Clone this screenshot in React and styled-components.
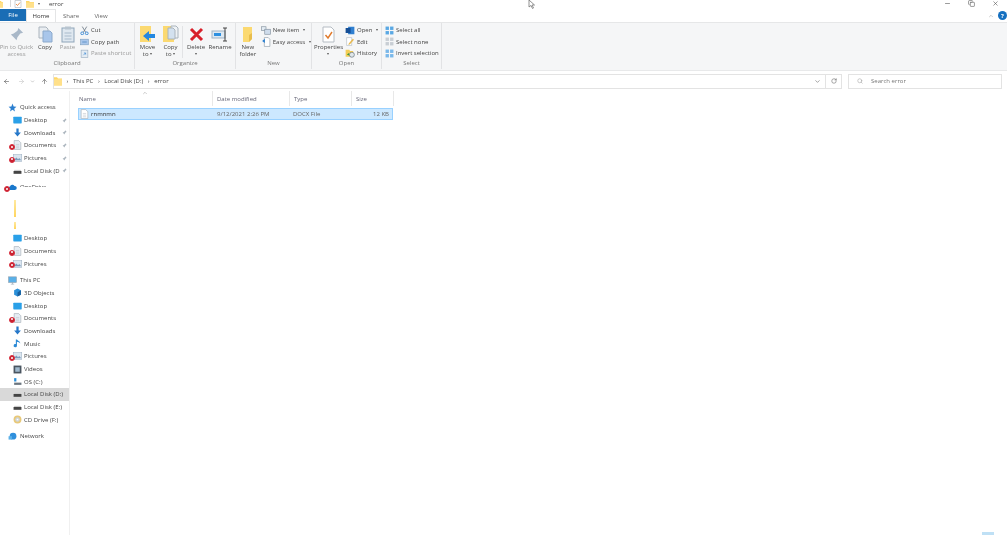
import React from "react";
import styled, { createGlobalStyle } from "styled-components";
import { ChevronDown, ChevronUp, RotateCw, ArrowLeft, ArrowRight, ArrowUp, Search, Minus, X, Copy as CopyGlyph } from "lucide-react";

const GlobalStyle = createGlobalStyle`
  html, body { margin: 0; padding: 0; background: #fff; }
  * { box-sizing: border-box; }
`;

const Page = styled.div`
  position: relative;
  width: 1007px;
  height: 535px;
  overflow: hidden;
  background: #fff;
  color: #333;
  font-family: "Open Sans", "Liberation Sans", sans-serif;
  font-size: 6px;
  line-height: 1;
  filter: blur(0.35px);
`;

/* title bar */
const TitleBar = styled.div`
  height: 9px;
  display: flex;
  align-items: center;
  position: relative;
`;
const QuickTools = styled.div`
  display: grid;
  grid-template-columns: 10px 4px 12px 12px 11px;
  align-items: center;
  height: 9px;
  overflow: hidden;
  margin-top: -2px;
`;
const ToolLine = styled.span`
  display: block;
  width: 1px;
  height: 7px;
  background: #d8d8d8;
`;
const TitleText = styled.span`
  margin-top: -2px;
  color: #444;
`;
const WindowButtons = styled.div`
  margin-left: auto;
  margin-right: 8px;
  margin-top: -3px;
  display: flex;
  gap: 17px;
  color: #555;
`;
const Cursor = styled.svg`
  position: absolute;
  left: 528px;
  top: 0;
`;

/* tabs */
const TabBar = styled.div`
  height: 13px;
  display: flex;
  align-items: stretch;
  background: #fff;
  position: relative;
`;
const FileTab = styled.div`
  width: 26px;
  background: #1a6db5;
  color: #fff;
  display: flex;
  align-items: center;
  justify-content: center;
  margin-bottom: 1px;
`;
const Tab = styled.div`
  width: 30px;
  display: flex;
  align-items: center;
  justify-content: center;
  color: ${({ $active }) => ($active ? "#333" : "#666")};
  border: 1px solid ${({ $active }) => ($active ? "#e4e5e6" : "transparent")};
  border-bottom: 0;
  background: #fff;
`;
const TabRight = styled.div`
  margin-left: auto;
  display: flex;
  align-items: center;
  gap: 4px;
  color: #999;
`;
const Help = styled.div`
  width: 9px;
  height: 9px;
  border-radius: 50%;
  background: #1570c0;
  color: #fff;
  font-weight: 700;
  display: flex;
  align-items: center;
  justify-content: center;
`;

/* ribbon */
const Ribbon = styled.div`
  height: 49px;
  display: flex;
  background: #f5f6f7;
  border-top: 1px solid #e6e7e8;
  border-bottom: 1px solid #e8e9ea;
`;
const Group = styled.div`
  width: ${({ $w }) => $w}px;
  height: 46px;
  display: flex;
  flex-direction: column;
  border-right: 1px solid #e2e3e5;
`;
const GroupBody = styled.div`
  flex: 1;
  display: flex;
  padding-left: ${({ $pad }) => $pad || 0}px;
`;
const GroupLabel = styled.div`
  height: 8px;
  margin-bottom: 2px;
  display: flex;
  align-items: center;
  justify-content: center;
  color: #777;
`;
const Large = styled.div`
  width: ${({ $w }) => $w}px;
  display: flex;
  flex-direction: column;
  align-items: center;
  padding-top: 2px;
  text-align: center;
  line-height: 7px;
  color: ${({ $dim }) => ($dim ? "#9a9a9a" : "#444")};
`;
const LargeIcon = styled.div`
  height: 18px;
  margin-bottom: 1px;
  display: flex;
  align-items: center;
  justify-content: center;
`;
const NoWrap = styled.span`
  white-space: nowrap;
`;
const GroupDivider = styled.div`
  width: 1px;
  height: 32px;
  margin-top: 3px;
  background: #e2e3e5;
`;
const Caret = styled.span`
  display: inline-block;
  width: 0;
  height: 0;
  border-left: 1.5px solid transparent;
  border-right: 1.5px solid transparent;
  border-top: 2px solid #555;
  margin-left: ${({ $gap }) => $gap ?? 2}px;
  vertical-align: 1px;
`;
const SmallColumn = styled.div`
  display: flex;
  flex-direction: column;
  gap: 2.6px;
  padding-top: 2.5px;
  margin-left: ${({ $ml }) => $ml || 0}px;
`;
const SmallItem = styled.div`
  height: 9px;
  display: flex;
  align-items: center;
  gap: 2px;
  white-space: nowrap;
  color: ${({ $dim }) => ($dim ? "#9a9a9a" : "#444")};
`;

/* address row */
const AddressRow = styled.div`
  height: 20px;
  display: flex;
  align-items: center;
  padding-left: 3px;
  color: #555;
`;
const NavArrows = styled.div`
  width: 50px;
  display: grid;
  grid-template-columns: 15px 12px 11px 12px;
  align-items: center;
`;
const AddressBox = styled.div`
  width: 773px;
  height: 15px;
  display: flex;
  align-items: center;
  border: 1px solid #e3e3e3;
  gap: 4.6px;
  color: #444;
`;
const AddressEnd = styled.div`
  margin-left: auto;
  margin-right: 4px;
  color: #666;
  display: flex;
`;
const Refresh = styled.div`
  width: 16px;
  height: 15px;
  border: 1px solid #e3e3e3;
  border-left: 0;
  display: flex;
  align-items: center;
  justify-content: center;
  color: #555;
`;
const SearchBox = styled.div`
  width: 154px;
  height: 15px;
  margin-left: 6px;
  border: 1px solid #e3e3e3;
  display: flex;
  align-items: center;
  padding-left: 8px;
  gap: 8px;
  color: #777;
`;

/* body */
const Body = styled.div`
  display: flex;
  height: 444px;
`;
const NavPane = styled.div`
  width: 70px;
  border-right: 1px solid #f0f0f0;
  padding-top: 10px;
  display: flex;
  flex-direction: column;
`;
const NavGap = styled.div`
  height: ${({ $h }) => $h}px;
  flex: none;
`;
const NavRow = styled.div`
  position: relative;
  height: 12.7px;
  flex: none;
  width: 69px;
  display: flex;
  align-items: center;
  padding-left: ${({ $top }) => ($top ? 8 : 13)}px;
  gap: ${({ $top }) => ($top ? 3 : 2)}px;
  background: ${({ $sel }) => ($sel ? "#d9d9d9" : "transparent")};
  color: #444;
  white-space: nowrap;
`;
const PinMark = styled.svg`
  position: absolute;
  left: 62px;
  top: 4px;
`;
const ErrorBadge = styled.span`
  position: absolute;
  left: ${({ $top }) => ($top ? 4 : 9)}px;
  top: 5px;
  width: 6px;
  height: 6px;
  border-radius: 50%;
  background: #c8202f;
  border: 1.5px solid #d82f3f;
  display: block;
  &::after {
    content: "";
    display: block;
    width: 2px;
    height: 2px;
    margin: 0.5px;
    border-radius: 50%;
    background: #fff;
  }
`;
const CutText = styled.span`
  display: block;
  height: 4px;
  overflow: hidden;
  line-height: 8px;
  margin-top: -5px;
`;
const Sliver = styled.div`
  height: ${({ $h }) => $h}px;
  width: 2px;
  margin-left: 14px;
  flex: none;
  background: linear-gradient(#ffe9a0, #ffd55e);
`;

/* list */
const List = styled.div`
  flex: 1;
  position: relative;
  padding-left: 8px;
`;
const SortMark = styled.div`
  position: absolute;
  left: 72px;
  top: -1px;
  color: #999;
`;
const ColumnHeader = styled.div`
  display: grid;
  grid-template-columns: 135px 77px 62px 42px;
  height: 17px;
  align-items: start;
  color: #667;
`;
const HeadCell = styled.div`
  height: 15px;
  display: flex;
  align-items: center;
  padding-left: ${({ $first }) => ($first ? 1 : 4)}px;
  border-right: 1px solid #e8e8e8;
`;
const FileRow = styled.div`
  display: grid;
  grid-template-columns: 134px 76px 62px 41px;
  width: 315px;
  height: 12px;
  align-items: center;
  background: #cce8ff;
  border: 1px solid #99d1ff;
  color: #666;
`;
const FileName = styled.div`
  display: flex;
  align-items: center;
  gap: 2px;
  padding-left: 1px;
  color: #333;
`;
const FileCell = styled.div`
  padding-left: ${({ $right }) => ($right ? 0 : 4)}px;
  padding-right: ${({ $right }) => ($right ? 3 : 0)}px;
  text-align: ${({ $right }) => ($right ? "right" : "left")};
`;
const Scrap = styled.div`
  position: absolute;
  left: 982px;
  bottom: 0;
  width: 12px;
  height: 3px;
  background: #bfe0f5;
`;

/* drawings */
const Folder = ({ w = 9, h = 9, c = "#ffd766" }) => (
  <svg width={w} height={h} viewBox="0 0 16 16" preserveAspectRatio="none">
    <path d="M0 2h6l2 2h8v11H0z" fill={c} />
    <path d="M0 5h16v10H0z" fill="#ffe08a" />
  </svg>
);
const Tick = () => (
  <svg width="8" height="8" viewBox="0 0 16 16">
    <path d="M2 1h12v14H2z" fill="#fff" stroke="#9aa4ae" />
    <path d="M4 8l3 3 5-6" stroke="#e07a2c" strokeWidth="1.600" fill="none" />
  </svg>
);
const Doc = ({ c = "#fff", b = "#9aa4ae" }) => (
  <svg width="9" height="10" viewBox="0 0 16 18">
    <path d="M2 1h8l4 4v12H2z" fill={c} stroke={b} />
    <path d="M5 8h6M5 11h6M5 14h6" stroke="#b8c0c8" />
  </svg>
);
const Screen = ({ c = "#2aa0e8" }) => (
  <svg width="9" height="8" viewBox="0 0 16 14">
    <rect x="0.5" y="1" width="15" height="12" rx="1" fill={c} />
  </svg>
);
const Down = () => (
  <svg width="9" height="9" viewBox="0 0 16 16">
    <path d="M6 1h4v7h4l-6 7-6-7h4z" fill="#2678c9" />
  </svg>
);
const PicIcon = () => (
  <svg width="9" height="8" viewBox="0 0 16 14">
    <rect x="0.5" y="1" width="15" height="12" fill="#dbe6f0" stroke="#9fb2c4" />
    <path d="M2 10l4-4 3 3 2-2 3 3v1H2z" fill="#7b9cbc" />
  </svg>
);
const Drive = () => (
  <svg width="9" height="8" viewBox="0 0 16 14">
    <rect x="1" y="7" width="14" height="5" fill="#444" />
    <rect x="2" y="5" width="12" height="2" fill="#ccc" />
  </svg>
);
const Star = () => (
  <svg width="9" height="9" viewBox="0 0 16 16">
    <path d="M8 1l2 5 5 .5-4 3.5 1.500 5L8 12l-4.500 3L5 10 1 6.500 6 6z" fill="#2b7fd0" />
  </svg>
);
const Cloud = () => (
  <svg width="9" height="7" viewBox="0 0 18 12">
    <path d="M4 11a3.500 3.500 0 0 1 0-7 5 5 0 0 1 9-1 4 4 0 0 1 1 8z" fill="#1a78cc" />
  </svg>
);
const Pc = () => (
  <svg width="9" height="9" viewBox="0 0 16 15">
    <rect x="1" y="1" width="14" height="10" fill="#5ab0e8" stroke="#8a9aa8" />
    <path d="M5 14h6M8 11v3" stroke="#8a9aa8" />
  </svg>
);
const Cube = () => (
  <svg width="9" height="9" viewBox="0 0 16 16">
    <path d="M8 1l6 3v8l-6 3-6-3V4z" fill="#2a8fd8" />
    <path d="M8 8l6-4v8l-6 3z" fill="#175f9e" />
  </svg>
);
const Note = () => (
  <svg width="9" height="10" viewBox="0 0 16 18">
    <path d="M7 1v11a3 3 0 1 1-2-2.800V1zM7 1c2 3 6 3 6 7-1-2-4-2-6-3z" fill="#2b8ad6" />
  </svg>
);
const Film = () => (
  <svg width="9" height="9" viewBox="0 0 16 16">
    <rect x="1" y="1" width="14" height="14" fill="#4a5560" />
    <rect x="4" y="4" width="8" height="8" fill="#9fb8cc" />
  </svg>
);
const OsDrive = () => (
  <svg width="9" height="9" viewBox="0 0 16 16">
    <path d="M2 2h4v6H2z" fill="#2a8fd8" />
    <rect x="2" y="10" width="13" height="4" fill="#6b7680" />
  </svg>
);
const Disc = () => (
  <svg width="9" height="9" viewBox="0 0 16 16">
    <circle cx="8" cy="8" r="7" fill="#e8c878" />
    <circle cx="8" cy="8" r="4" fill="#cfd6dc" />
    <circle cx="8" cy="8" r="1.500" fill="#fff" />
  </svg>
);
const Net = () => (
  <svg width="9" height="9" viewBox="0 0 16 15">
    <circle cx="9" cy="7" r="6" fill="#2f8fdc" />
    <rect x="1" y="7" width="6" height="6" fill="#5ab0e8" />
  </svg>
);
const BigPin = () => (
  <svg width="15" height="15" viewBox="0 0 16 16">
    <path d="M10 1l5 5-3 1-3 4-1 3-3-3-4 4 4-4-3-3 3-1 4-3z" fill="#a9b8c8" />
  </svg>
);
const CopyBig = () => (
  <svg width="15" height="17" viewBox="0 0 15 17">
    <path d="M1 1h7l2 2v9H1z" fill="#e9edf1" stroke="#aab4bd" />
    <path d="M5 5h7l2 2v9H5z" fill="#a9c6ea" stroke="#8ba9cc" />
  </svg>
);
const PasteBig = () => (
  <svg width="14" height="17" viewBox="0 0 14 17">
    <rect x="1" y="2" width="12" height="14" fill="#dfe8f0" stroke="#8fa5ba" />
    <rect x="4" y="0.500" width="6" height="3" fill="#b8c4cf" />
    <path d="M3.500 7h7M3.500 10h7M3.500 13h7" stroke="#a8bacb" />
  </svg>
);
const MoveBig = ({ flip }) => (
  <svg width="18" height="18" viewBox="0 0 18 18">
    <path d="M1 1h11v16H1z" fill="#fbd971" />
    {flip ? (
      <>
        <path d="M9 1h5l2 2v10H9z" fill="#eef2f5" stroke="#aab4bd" />
        <path d="M6 3h5l2 2v9H6z" fill="#d3e1ef" stroke="#aab4bd" />
      </>
    ) : (
      <path d="M4 11l6-5v3h6v4h-6v3z" fill="#2488e0" />
    )}
  </svg>
);
const RedX = () => (
  <svg width="15" height="15" viewBox="0 0 15 15">
    <path d="M2 2l11 11M13 2L2 13" stroke="#d8202a" strokeWidth="3" />
  </svg>
);
const RenameBig = () => (
  <svg width="18" height="15" viewBox="0 0 18 15">
    <rect x="1" y="4" width="13" height="7" fill="#dce8f2" stroke="#9fb2c4" />
    <rect x="3" y="6" width="7" height="3" fill="#2c8fe0" />
    <path d="M14 1v13M12 1h4M12 14h4" stroke="#444" />
  </svg>
);
const NewFolder = () => (
  <svg width="11" height="17" viewBox="0 0 11 17">
    <path d="M1 1h9v12l-3 3H1z" fill="#fbd971" />
    <path d="M7 16V9l3-2v6z" fill="#e8bd4c" />
  </svg>
);
const Props = () => (
  <svg width="13" height="17" viewBox="0 0 13 17">
    <path d="M1 1h8l3 3v12H1z" fill="#fff" stroke="#b5bcc3" />
    <path d="M3.500 9l2.500 3 4-6" stroke="#e07a2c" strokeWidth="1.400" fill="none" />
  </svg>
);
const Word = () => (
  <svg width="10" height="9" viewBox="0 0 16 14">
    <rect x="5" y="1" width="10" height="12" fill="#2f7fd0" />
    <rect x="1" y="3" width="8" height="8" fill="#154f96" />
  </svg>
);
const Edit = () => (
  <svg width="10" height="9" viewBox="0 0 16 16">
    <path d="M2 1h9v14H2z" fill="#fff" stroke="#aab4bd" />
    <path d="M6 11l7-8 2 2-7 8-3 1z" fill="#e8b84c" />
  </svg>
);
const History = () => (
  <svg width="10" height="9" viewBox="0 0 16 14">
    <path d="M1 1h6l1 2h5v9H1z" fill="#f4cd55" />
    <circle cx="11" cy="9" r="4" fill="#dfe6ea" stroke="#5c6a74" />
    <path d="M3 9l3-3 1 4z" fill="#3c9a3c" />
  </svg>
);
const Grid4 = ({ c = "#5aa8e4" }) => (
  <svg width="9" height="9" viewBox="0 0 16 16">
    <rect x="1" y="1" width="6" height="6" fill={c} />
    <rect x="9" y="1" width="6" height="6" fill={c} />
    <rect x="1" y="9" width="6" height="6" fill={c} />
    <rect x="9" y="9" width="6" height="6" fill={c} />
  </svg>
);
const Scissors = () => (
  <svg width="9" height="9" viewBox="0 0 16 16">
    <path d="M4 1l6 10M12 1L6 11" stroke="#6f7c88" strokeWidth="1.500" />
    <circle cx="4" cy="13" r="2.500" fill="none" stroke="#2a7fd0" strokeWidth="1.500" />
    <circle cx="12" cy="13" r="2.500" fill="none" stroke="#2a7fd0" strokeWidth="1.500" />
  </svg>
);
const CopyPath = () => (
  <svg width="9" height="8" viewBox="0 0 16 14">
    <rect x="1" y="2" width="14" height="10" fill="#a9c6ea" stroke="#7b9cbc" />
    <path d="M4 7h8" stroke="#2a6fb0" />
  </svg>
);
const PasteShort = () => (
  <svg width="9" height="9" viewBox="0 0 16 16">
    <rect x="2" y="2" width="12" height="13" fill="#e4ecf3" stroke="#8fa5ba" />
    <path d="M6 11l4-4M7 7h3v3" stroke="#2a7fd0" fill="none" />
  </svg>
);
const NewItem = () => (
  <svg width="10" height="9" viewBox="0 0 16 14">
    <rect x="1" y="1" width="7" height="6" fill="#e4ecf3" stroke="#7e8d9a" />
    <rect x="6" y="5" width="9" height="8" fill="#cfdceb" stroke="#7e8d9a" />
  </svg>
);
const Easy = () => (
  <svg width="10" height="10" viewBox="0 0 16 18">
    <path d="M5 1h7l3 3v13H5z" fill="#fff" stroke="#7e8d9a" />
    <path d="M1 7l5-4v8z" fill="#2a7fd0" />
  </svg>
);

const quickAccess = [
  { name: "Desktop", icon: <Screen />, pin: true },
  { name: "Downloads", icon: <Down />, pin: true },
  { name: "Documents", icon: <Doc c="#e6edf4" />, pin: true, error: true },
  { name: "Pictures", icon: <PicIcon />, pin: true, error: true },
  { name: "Local Disk (D", icon: <Drive />, pin: true },
];
const oneDrive = [
  { name: "Desktop", icon: <Screen /> },
  { name: "Documents", icon: <Doc c="#e6edf4" />, error: true },
  { name: "Pictures", icon: <PicIcon />, error: true },
];
const thisPc = [
  { name: "3D Objects", icon: <Cube /> },
  { name: "Desktop", icon: <Screen /> },
  { name: "Documents", icon: <Doc c="#e6edf4" />, error: true },
  { name: "Downloads", icon: <Down /> },
  { name: "Music", icon: <Note /> },
  { name: "Pictures", icon: <PicIcon />, error: true },
  { name: "Videos", icon: <Film /> },
  { name: "OS (C:)", icon: <OsDrive /> },
  { name: "Local Disk (D:)", icon: <Drive />, sel: true },
  { name: "Local Disk (E:)", icon: <Drive /> },
  { name: "CD Drive (F:)", icon: <Disc /> },
];

const NavItem = ({ item }) => (
  <NavRow $sel={item.sel}>
    {item.error && <ErrorBadge />}
    {item.icon}
    <span>{item.name}</span>
    {item.pin && (
      <PinMark width="5" height="5" viewBox="0 0 16 16">
        <path d="M10 1l5 5-3 1-3 4-1 3-3-3-4 4 4-4-3-3 3-1 4-3z" fill="#aab4bd" />
      </PinMark>
    )}
  </NavRow>
);

const App = () => (
  <Page>
    <GlobalStyle />
    <TitleBar>
      <QuickTools>
        <Folder w={3} h={8} />
        <ToolLine />
        <Tick />
        <Folder w={8} h={8} />
        <Caret $gap={0} />
      </QuickTools>
      <TitleText>error</TitleText>
      <WindowButtons>
        <Minus size={7} />
        <CopyGlyph size={7} />
        <X size={7} />
      </WindowButtons>
      <Cursor width="7" height="9" viewBox="0 0 7 9">
        <path d="M1 0v7l2-1.500L4.500 8.500l1-.5L4 5h2.500z" fill="#fff" stroke="#666" strokeWidth="0.700" />
      </Cursor>
    </TitleBar>
    <TabBar>
      <FileTab>File</FileTab>
      <Tab $active>Home</Tab>
      <Tab>Share</Tab>
      <Tab>View</Tab>
      <TabRight>
        <ChevronUp size={6} />
        <Help>?</Help>
      </TabRight>
    </TabBar>
    <Ribbon>
      <Group $w={135}>
        <GroupBody>
          <Large $w={33} $dim>
            <LargeIcon><BigPin /></LargeIcon>
            <NoWrap>Pin to Quick<br />access</NoWrap>
          </Large>
          <Large $w={24}>
            <LargeIcon><CopyBig /></LargeIcon>
            Copy
          </Large>
          <Large $w={21} $dim>
            <LargeIcon><PasteBig /></LargeIcon>
            Paste
          </Large>
          <SmallColumn $ml={2}>
            <SmallItem><Scissors />Cut</SmallItem>
            <SmallItem><CopyPath />Copy path</SmallItem>
            <SmallItem $dim><PasteShort />Paste shortcut</SmallItem>
          </SmallColumn>
        </GroupBody>
        <GroupLabel>Clipboard</GroupLabel>
      </Group>
      <Group $w={101}>
        <GroupBody $pad={1}>
          <Large $w={23}>
            <LargeIcon><MoveBig /></LargeIcon>
            <span>Move<br />to <Caret $gap={0} /></span>
          </Large>
          <Large $w={23}>
            <LargeIcon><MoveBig flip /></LargeIcon>
            <span>Copy<br />to <Caret $gap={0} /></span>
          </Large>
          <GroupDivider />
          <Large $w={26}>
            <LargeIcon><RedX /></LargeIcon>
            <span>Delete<br /><Caret $gap={0} /></span>
          </Large>
          <Large $w={22}>
            <LargeIcon><RenameBig /></LargeIcon>
            Rename
          </Large>
        </GroupBody>
        <GroupLabel>Organize</GroupLabel>
      </Group>
      <Group $w={76}>
        <GroupBody $pad={1}>
          <Large $w={22}>
            <LargeIcon><NewFolder /></LargeIcon>
            New folder
          </Large>
          <SmallColumn $ml={2}>
            <SmallItem><NewItem />New item<Caret /></SmallItem>
            <SmallItem><Easy />Easy access<Caret /></SmallItem>
          </SmallColumn>
        </GroupBody>
        <GroupLabel>New</GroupLabel>
      </Group>
      <Group $w={70}>
        <GroupBody $pad={1}>
          <Large $w={31}>
            <LargeIcon><Props /></LargeIcon>
            <span>Properties<br /><Caret $gap={0} /></span>
          </Large>
          <SmallColumn $ml={1}>
            <SmallItem><Word />Open<Caret /></SmallItem>
            <SmallItem><Edit />Edit</SmallItem>
            <SmallItem><History />History</SmallItem>
          </SmallColumn>
        </GroupBody>
        <GroupLabel>Open</GroupLabel>
      </Group>
      <Group $w={60}>
        <GroupBody $pad={3}>
          <SmallColumn>
            <SmallItem><Grid4 />Select all</SmallItem>
            <SmallItem><Grid4 c="#c8ced4" />Select none</SmallItem>
            <SmallItem><Grid4 c="#7ab8ea" />Invert selection</SmallItem>
          </SmallColumn>
        </GroupBody>
        <GroupLabel>Select</GroupLabel>
      </Group>
    </Ribbon>
    <AddressRow>
      <NavArrows>
        <ArrowLeft size={7} />
        <ArrowRight size={7} color="#c4c4c4" />
        <ChevronDown size={5} color="#888" />
        <ArrowUp size={7} />
      </NavArrows>
      <AddressBox>
        <Folder w={8} h={10} />
        <span>›</span>
        <span>This PC</span>
        <span>›</span>
        <span>Local Disk (D:)</span>
        <span>›</span>
        <span>error</span>
        <AddressEnd><ChevronDown size={7} /></AddressEnd>
      </AddressBox>
      <Refresh><RotateCw size={6} /></Refresh>
      <SearchBox>
        <Search size={6} color="#999" />
        <span>Search error</span>
      </SearchBox>
    </AddressRow>
    <Body>
      <NavPane>
        <NavRow $top><Star />Quick access</NavRow>
        {quickAccess.map((item) => <NavItem key={item.name} item={item} />)}
        <NavGap $h={4} />
        <NavRow $top>
          <ErrorBadge $top />
          <Cloud />
          <CutText>OneDrive</CutText>
        </NavRow>
        <NavGap $h={6.5} />
        <Sliver $h={17} />
        <NavGap $h={5} />
        <Sliver $h={7} />
        <NavGap $h={2.5} />
        {oneDrive.map((item) => <NavItem key={item.name + "od"} item={item} />)}
        <NavGap $h={4} />
        <NavRow $top><Pc />This PC</NavRow>
        {thisPc.map((item) => <NavItem key={item.name + "pc"} item={item} />)}
        <NavGap $h={4} />
        <NavRow $top><Net />Network</NavRow>
      </NavPane>
      <List>
        <SortMark><ChevronUp size={6} /></SortMark>
        <ColumnHeader>
          <HeadCell $first>Name</HeadCell>
          <HeadCell>Date modified</HeadCell>
          <HeadCell>Type</HeadCell>
          <HeadCell>Size</HeadCell>
        </ColumnHeader>
        <FileRow>
          <FileName><Doc />rnmnmn</FileName>
          <FileCell>9/12/2021 2:26 PM</FileCell>
          <FileCell>DOCX File</FileCell>
          <FileCell $right>12 KB</FileCell>
        </FileRow>
      </List>
    </Body>
    <Scrap />
  </Page>
);

export default App;
